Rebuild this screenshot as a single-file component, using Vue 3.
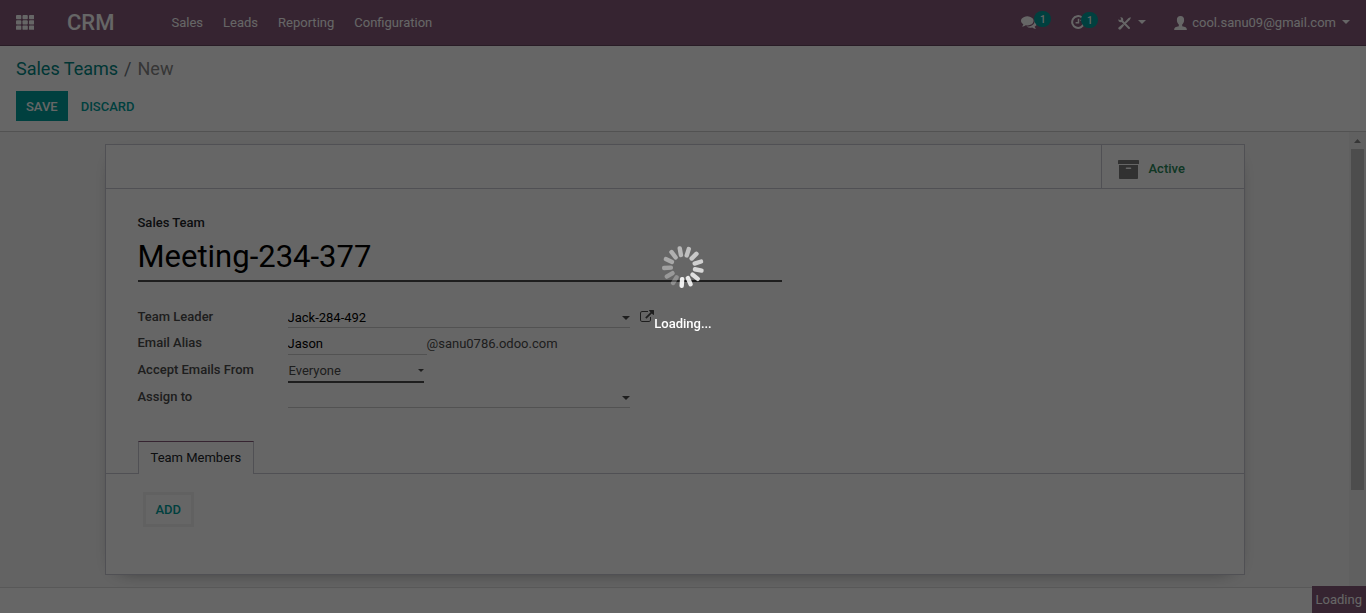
<script setup>
import { ref } from 'vue'

const menus = ['Sales', 'Leads', 'Reporting', 'Configuration']
const teamName = ref('Meeting-234-377')
const leader = ref('Jack-284-492')
const alias = ref('Jason')
const policy = ref('Everyone')
const assignee = ref('')

const blades = Array.from({ length: 13 }, (_, i) => ({
  angle: 184 - i * (360 / 13),
  opacity: 0.9 - i * 0.052,
}))
</script>

<template>
  <div class="client">
    <header class="navbar">
      <button class="apps" aria-label="Applications">
        <svg width="18" height="15" viewBox="0 0 18 15">
          <template v-for="r in 3" :key="r">
            <rect v-for="c in 3" :key="c" :x="(c - 1) * 6.5" :y="(r - 1) * 5.3" width="5.3" height="4.2" rx="0.9" />
          </template>
        </svg>
      </button>
      <a href="#" class="brand">CRM</a>
      <nav class="menu">
        <a v-for="m in menus" :key="m" href="#">{{ m }}</a>
      </nav>
      <div class="systray">
        <button class="tray" aria-label="Conversations">
          <svg width="16" height="16" viewBox="0 0 1792 1792">
            <path d="M1408 768q0 139-94 257t-256.5 186.5-353.5 68.5q-86 0-176-16-124 88-278 128-36 9-86 16h-3q-11 0-20.5-8t-11.5-21q-1-3-1-6.500t.5-6.500 2-6l2.500-5 3.500-5.500 4-5 4.500-5 4-4.500q5-6 23-25t26-29.500 22.500-29 25-38.500 20.500-44q-124-72-195-177t-71-224q0-139 94-257t256.500-186.500 353.500-68.500 353.500 68.500 256.500 186.500 94 257zm384 256q0 120-71 224.500t-195 176.500q10 24 20.500 44t25 38.500 22.500 29 26 29.500 23 25q1 1 4 4.500t4.500 5 4 5 3.500 5.500l2.500 5 2 6 .5 6.500-1 6.500q-3 14-13 22t-22 7q-50-7-86-16-154-40-278-128-90 16-176 16-271 0-472-132 58 4 88 4 161 0 309-45t264-129q125-92 192-212t67-254q0-77-23-152 129 71 204 178t75 230z" />
          </svg>
          <span class="count">1</span>
        </button>
        <button class="tray clock" aria-label="Activities">
          <svg width="14" height="14" viewBox="0 0 14 14">
            <path d="M11 2.600A5.900 5.900 0 1 0 12.900 8" class="stroke" stroke-width="2" />
            <path d="M7.500 3.800V7.700H4.600" class="stroke" stroke-width="1.500" />
            <path d="M13.500 1v4.800H8.800z" />
          </svg>
          <span class="count">1</span>
        </button>
        <button class="tray tools" aria-label="Developer tools">
          <svg width="13" height="13" viewBox="0 0 13 13">
            <path d="M3.400 3.400L11 11" class="stroke" stroke-width="2" stroke-linecap="round" />
            <path d="M.4 2.300L2.300 3.300 3.300 2.300 2.300.4C4.500 0 5.800 1.900 5.100 3.900L3.900 5.100C1.900 5.800 0 4.500.4 2.300z" />
            <path d="M12.300.2L12.900.8 11.700 3 6.200 8.200 5 7 10.300 1.300z" />
            <path d="M4.800 7.100L6.100 8.400 2.800 12.300Q1.900 13.200.8 12.300T.8 10.300z" />
          </svg>
          <svg class="caret" width="8" height="4" viewBox="0 0 8 4"><path d="M0 0h8L4 4z" /></svg>
        </button>
        <button class="tray user">
          <svg width="13" height="14" viewBox="0 0 13 14">
            <path d="M6.500 0C9.100 0 10.300 1.700 10.100 4.300 10 6.300 9.200 7.800 8.200 8.600V10.300Q12.800 11 12.800 13.200V14H.2V13.200Q.2 11 4.800 10.300V8.600C3.800 7.800 3 6.300 2.900 4.300 2.700 1.700 3.900 0 6.500 0z" />
          </svg>
          <span>cool.sanu09@gmail.com</span>
          <svg class="caret" width="8" height="4" viewBox="0 0 8 4"><path d="M0 0h8L4 4z" /></svg>
        </button>
      </div>
    </header>

    <section class="control">
      <div class="crumbs">
        <a href="#">Sales Teams</a><span class="sep">/</span><span class="here">New</span>
      </div>
      <div class="actions">
        <button class="save">SAVE</button>
        <button class="discard">DISCARD</button>
      </div>
    </section>

    <div class="content">
      <main class="view">
        <div class="backdrop">
          <form class="sheet" @submit.prevent>
            <div class="stats">
              <button type="button" class="stat">
                <svg width="21" height="19" viewBox="0 0 21 19">
                  <path d="M.6 0h19.800q.6 0 .6.600V4H0V.6Q0 0 .6 0z" />
                  <path fill-rule="evenodd" d="M1 5h19v13.200q0 .8-.8.8H1.800Q1 19 1 18.200zM8.500 7.400a.8.8 0 0 0 0 1.600h4a.8.8 0 0 0 0-1.600z" />
                </svg>
                Active
              </button>
            </div>

            <div class="title">
              <label for="name">Sales Team</label>
              <input id="name" v-model="teamName" type="text" />
            </div>

            <div class="fields">
              <div class="row">
                <label for="leader">Team Leader</label>
                <span class="combo">
                  <input id="leader" v-model="leader" type="text" />
                  <svg class="arrow" width="8" height="4" viewBox="0 0 8 4"><path d="M0 0h8L4 4z" /></svg>
                </span>
                <button type="button" class="open" aria-label="Open record">
                  <svg width="14" height="14" viewBox="0 0 1792 1792">
                    <path d="M1408 928v320q0 119-84.500 203.500t-203.500 84.500h-832q-119 0-203.500-84.500t-84.500-203.500v-832q0-119 84.500-203.500t203.500-84.500h704q14 0 23 9t9 23v64q0 14-9 23t-23 9h-704q-66 0-113 47t-47 113v832q0 66 47 113t113 47h832q66 0 113-47t47-113v-320q0-14 9-23t23-9h64q14 0 23 9t9 23zm384-864v512q0 26-19 45t-45 19-45-19l-176-176-652 652q-10 10-23 10t-23-10l-114-114q-10-10-10-23t10-23l652-652-176-176q-19-19-19-45t19-45 45-19h512q26 0 45 19t19 45z" />
                  </svg>
                </button>
              </div>
              <div class="row">
                <label for="alias">Email Alias</label>
                <input id="alias" v-model="alias" class="alias" type="text" />
                <span class="domain">@sanu0786.odoo.com</span>
              </div>
              <div class="row tall">
                <label for="policy">Accept Emails From</label>
                <span class="combo short">
                  <select id="policy" v-model="policy">
                    <option>Everyone</option>
                  </select>
                  <svg class="arrow" width="6" height="3" viewBox="0 0 8 4"><path d="M0 0h8L4 4z" /></svg>
                </span>
              </div>
              <div class="row last">
                <label for="assign">Assign to</label>
                <span class="combo">
                  <input id="assign" v-model="assignee" type="text" />
                  <svg class="arrow" width="8" height="4" viewBox="0 0 8 4"><path d="M0 0h8L4 4z" /></svg>
                </span>
              </div>
            </div>

            <div class="tabs">
              <a href="#" class="tab">Team Members</a>
            </div>
            <div class="pane">
              <button type="button" class="add">ADD</button>
            </div>
          </form>
        </div>
        <div class="chatter"></div>
      </main>
      <div class="scrollbar" aria-hidden="true">
        <svg width="7" height="4" viewBox="0 0 7 4"><path d="M0 4h7L3.500 0z" /></svg>
        <div class="thumb"></div>
      </div>
    </div>

    <div class="status">Loading</div>

    <div class="overlay">
      <svg width="44" height="44" viewBox="-22 -22 44 44">
        <rect
          v-for="b in blades" :key="b.angle"
          x="-2.200" y="-21" width="4.400" height="11" rx="2"
          :transform="`rotate(${b.angle})`" :opacity="b.opacity"
        />
      </svg>
      <p>Loading...</p>
    </div>
  </div>
</template>

<style>
body {
  overflow: hidden;
}
</style>

<style scoped>
.client, .client * {
  box-sizing: border-box;
}
.client {
  display: flex;
  flex-direction: column;
  height: 100vh;
  background: #fff;
  color: #4c4c4c;
  font: 13px/20px Roboto, "Liberation Sans", sans-serif;
}
a {
  text-decoration: none;
}
button, input, select {
  margin: 0;
  padding: 0;
  border: 0;
  border-radius: 0;
  background: none;
  color: inherit;
  font: inherit;
  outline: 0;
}
svg {
  display: block;
  flex: none;
  fill: currentColor;
}
.stroke {
  fill: none;
  stroke: currentColor;
}

.navbar {
  display: flex;
  align-items: center;
  flex: none;
  height: 46px;
  padding: 0 16px;
  border-bottom: 1px solid #68465f;
  background: #875a7b;
  color: #fff;
}
.navbar a {
  color: #fff;
}
.brand {
  margin-left: 33px;
  font-size: 22px;
  font-weight: 500;
}
.menu {
  display: flex;
  gap: 20px;
  margin-left: 57px;
}
.systray {
  display: flex;
  align-items: center;
  margin-left: auto;
}
.tray {
  position: relative;
  display: flex;
  align-items: center;
}
.tray > svg:first-child {
  margin-top: -2px;
}
.count {
  position: absolute;
  left: 13px;
  top: -5px;
  width: 17px;
  height: 16px;
  border-radius: 8px;
  background: #00a09d;
  font-size: 10px;
  font-weight: 500;
  line-height: 17px;
  text-align: center;
}
.clock {
  margin-left: 34px;
}
.clock .count {
  left: 10px;
}
.tools {
  gap: 7px;
  margin-left: 33px;
}
.tools > svg:first-child {
  margin-top: 2px;
}
.tools .caret {
  margin-top: -2px;
}
.user {
  gap: 5px;
  margin-left: 28px;
}
.user > svg:first-child {
  margin-top: 0;
}
.user .caret {
  margin: -2px 0 0 1px;
}

.control {
  flex: none;
  padding: 11px 16px 10px;
  border-bottom: 1px solid #ccc;
}
.crumbs {
  font-size: 18px;
  line-height: 24px;
}
.crumbs a {
  color: #008784;
}
.sep {
  margin: 0 6px;
  color: #6c757d;
}
.here {
  color: #888;
}
.actions {
  display: flex;
  gap: 13px;
  margin-top: 10px;
  font-weight: 500;
  line-height: 28px;
}
.actions button {
  padding-top: 2px;
}
.actions .save {
  padding: 2px 10px 0;
  background: #00a09d;
  color: #fff;
}
.discard {
  color: #00a09d;
}

.content {
  display: flex;
  flex: 1;
  min-height: 0;
}
.view {
  display: flex;
  flex: 1;
  flex-direction: column;
  overflow: hidden;
}
.backdrop {
  padding: 12px 16px;
  background: #f8f8f8;
}
.sheet {
  max-width: 1140px;
  margin: 0 auto;
  border: 1px solid #c8c8d3;
  background: #fff;
  box-shadow: 0 5px 20px -15px #000;
}
.stats {
  display: flex;
  justify-content: flex-end;
  height: 44px;
  border-bottom: 1px solid #c8c8d3;
}
.stat {
  display: flex;
  align-items: center;
  gap: 10px;
  width: 143px;
  padding: 5px 0 0 16px;
  border-left: 1px solid #c8c8d3;
  color: #28895a;
  font-weight: 500;
}
.stat svg {
  color: #7c7c7c;
}
.title {
  padding: 24px 32px 0;
}
.title label {
  display: block;
  color: #212529;
  font-weight: 500;
}
.title input {
  display: block;
  width: 60%;
  height: 49px;
  border-bottom: 2px solid #4c4c4c;
  color: #000;
  font-size: 31px;
}
.fields {
  padding: 19px 32px 0;
}
.row {
  display: flex;
  align-items: flex-end;
  height: 27px;
}
.row.tall {
  height: 28px;
}
.row.last {
  height: 25px;
}
.row label {
  width: 150px;
  padding-bottom: 1px;
  color: #4c4c4c;
  font-weight: 500;
  line-height: 22px;
}
.row:first-child label,
.row.last label {
  padding-bottom: 0;
}
.tall label {
  padding-bottom: 2px;
}
.combo {
  position: relative;
  width: 342px;
}
.combo.short {
  width: 136px;
}
.row input {
  display: block;
  width: 100%;
  height: 22px;
  padding-top: 1px;
  border-bottom: 1px solid #ccc;
  color: #000;
}
.row .alias {
  width: 139px;
  padding-top: 0;
}
select {
  display: block;
  width: 100%;
  height: 24px;
  padding: 1px 0 0 1px;
  border-bottom: 2px solid #4c4c4c;
  appearance: none;
}
.arrow {
  position: absolute;
  right: 0;
  top: 10px;
}
.open {
  margin: 0 0 4px 10px;
}
.domain {
  line-height: 22px;
}
.tabs {
  display: flex;
  margin-top: 33px;
  padding-left: 32px;
  border-bottom: 1px solid #c8c8d3;
}
.tab {
  margin-bottom: -1px;
  padding: 6px 12px;
  border: 1px solid #c8c8d3;
  border-top-color: #875a7b;
  border-bottom: 0;
  background: #fff;
  color: #212529;
}
.pane {
  padding: 18px 37px 47px;
}
.add {
  padding: 4px 10px;
  border: 3px solid #f2f2f2;
  color: #00a09d;
  font-weight: 500;
  line-height: 21px;
}
.chatter {
  flex: 1;
  border-top: 1px solid #dcdcdc;
}
.scrollbar {
  display: flex;
  flex-direction: column;
  align-items: center;
  flex: none;
  width: 17px;
  padding: 7px 2px 0;
  background: #f1f1f1;
  color: #888;
}
.thumb {
  width: 100%;
  height: 72%;
  margin-top: 6px;
  background: #c1c1c1;
}
.status {
  position: fixed;
  right: 0;
  bottom: 0;
  padding: 4px 4px 3px;
  background: #875a7b;
  color: #fff;
}
.overlay {
  position: fixed;
  inset: 0;
  display: flex;
  flex-direction: column;
  align-items: center;
  padding-top: 245px;
  background: rgba(0, 0, 0, 0.6);
  color: #fff;
  font-weight: 500;
}
.overlay p {
  margin: 25px 0 0;
}
</style>
